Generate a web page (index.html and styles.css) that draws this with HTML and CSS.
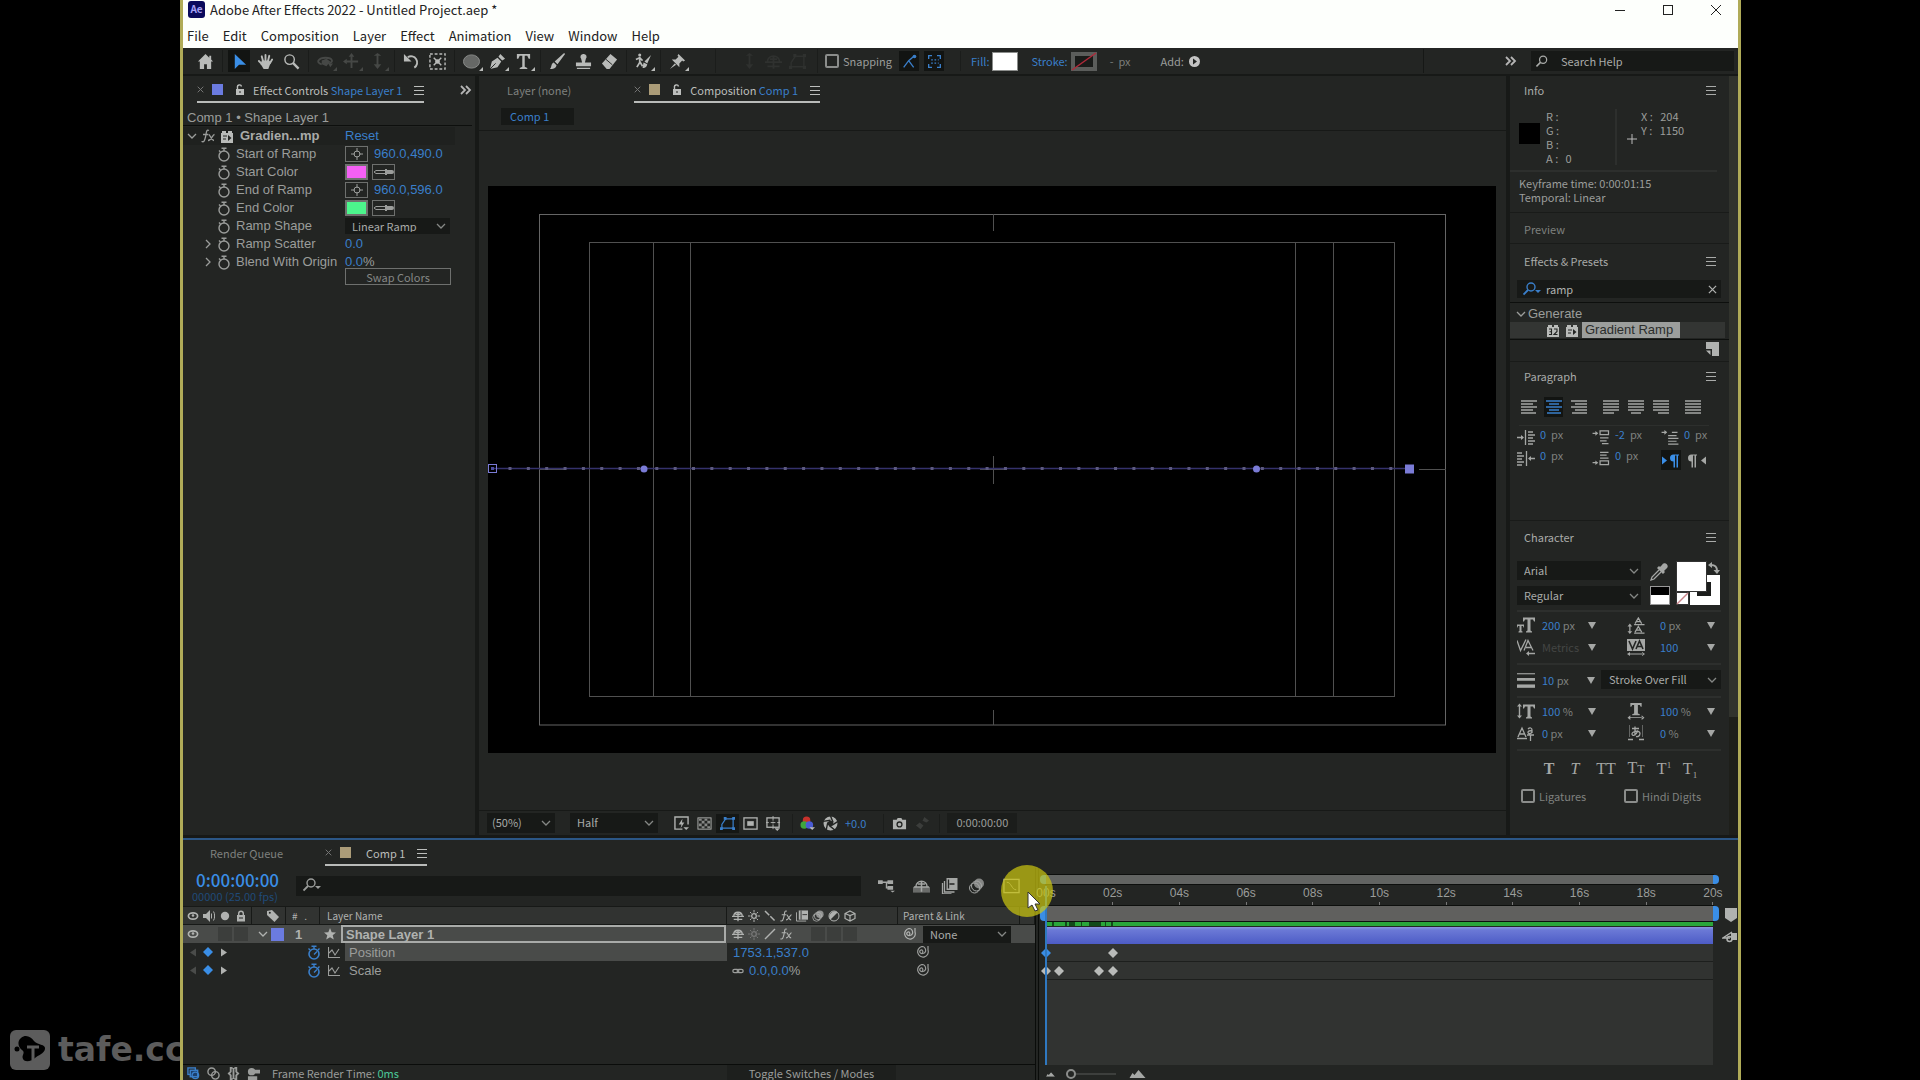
FILE: index.html
```html
<!DOCTYPE html>
<html lang="en">
<head>
    <meta charset="utf-8">
    <meta name="viewport" content="width=device-width, initial-scale=1">
    <title>Adobe After Effects 2022 - Untitled Project.aep *</title>
    <link rel="stylesheet" href="styles.css">
</head>
<body>
    <!-- icon sprite -->
    <svg class="sprite" aria-hidden="true">
        <symbol id="i-home" viewBox="0 0 18 18"><path fill="currentColor" d="M9 1 1 9h2v8h4.500v-5h3v5H15V9h2l-2-2V3h-2v2z"/></symbol>
        <symbol id="i-select" viewBox="0 0 18 18"><path fill="currentColor" d="M4 1v16l4.500-4.500H16z"/></symbol>
        <symbol id="i-hand" viewBox="0 0 18 18"><path fill="none" stroke="currentColor" stroke-width="2" stroke-linecap="round" d="M6.500 9 5 3.500M9 8V2M11.500 9 13 3M13.500 11 16 7M5.500 12 2 8.500"/><path fill="currentColor" d="M5 8h8l1.500 2-2.500 7H7l-3-5z"/></symbol>
        <symbol id="i-zoom" viewBox="0 0 18 18"><path fill="none" stroke="currentColor" stroke-width="1.500" d="M12 7A5 5 0 1 1 2 7a5 5 0 0 1 10 0z"/><path stroke="currentColor" stroke-width="2.500" d="m10.500 10.500 6 6"/></symbol>
        <symbol id="i-orbit" viewBox="0 0 18 18"><path fill="none" stroke="currentColor" stroke-width="2" d="M5 12c-7-2-3-7 4-7 8 0 9 5 3 6"/><path fill="currentColor" d="m5 8 5-2 4 3-4 5-5-2zM12 11h5l-3 4z"/></symbol>
        <symbol id="i-move" viewBox="0 0 18 18"><path stroke="currentColor" stroke-width="2" d="M9 2v14M2 9h14"/><path fill="currentColor" d="m9 0 3 4H6zM0 9l4-3v6z"/></symbol>
        <symbol id="i-dolly" viewBox="0 0 18 18"><path stroke="currentColor" stroke-width="2" d="M9 1v13"/><path fill="currentColor" d="m9 17-4-5h8zM5 3l4-3 4 3z"/></symbol>
        <symbol id="i-rotate" viewBox="0 0 18 18"><path fill="none" stroke="currentColor" stroke-width="2" d="M5 4.500A6.500 6.500 0 1 1 12 15.500"/><path fill="currentColor" d="M1 1v8h8z"/></symbol>
        <symbol id="i-anchor" viewBox="0 0 18 18"><rect x="1" y="1" width="16" height="16" fill="none" stroke="currentColor" stroke-width="1.500" stroke-dasharray="3 2"/><path stroke="currentColor" stroke-width="1.500" d="m5 5 8 8M13 5l-8 8"/><circle cx="9" cy="9" r="2.500" fill="currentColor"/></symbol>
        <symbol id="i-ellipse" viewBox="0 0 18 18"><ellipse cx="9" cy="9" rx="8.500" ry="7" fill="#666866" stroke="#8b8d8b"/></symbol>
        <symbol id="i-pen" viewBox="0 0 18 18"><path fill="currentColor" d="M1 17 3 9l6-4 4 4-4 6zM10 4l2-3 5 5-3 2z"/><path stroke="#232523" d="m1 17 6-6"/></symbol>
        <symbol id="i-type" viewBox="0 0 18 18"><path fill="currentColor" d="M2 1h14v5h-1.500L13 3h-2.700v11.500L13 16v1H5v-1l2.700-1.500V3H5L3.500 6H2z"/></symbol>
        <symbol id="i-brush" viewBox="0 0 18 18"><path fill="currentColor" d="M17 1 9 12l-3-3L16 0zM5 10l3 3c-1 4-4 4-7 4 2-2 1-6 4-7z"/></symbol>
        <symbol id="i-stamp" viewBox="0 0 18 18"><path fill="currentColor" d="M9 1a3 3 0 0 1 2.500 5L10.500 10H17v4H1v-4h6.500L6.500 6A3 3 0 0 1 9 1zM2 15.500h14V17H2z"/></symbol>
        <symbol id="i-eraser" viewBox="0 0 18 18"><path fill="currentColor" d="m1 11 9-10 7 6-8 10H6z"/><path stroke="#232523" d="m5 6.500 7 6"/></symbol>
        <symbol id="i-roto" viewBox="0 0 18 18"><path fill="none" stroke="currentColor" stroke-width="1.800" d="M5 4v6l-3 5M5 9l3 5M1 7l4-2 3 3"/><circle cx="5" cy="2" r="1.600" fill="currentColor"/><path fill="currentColor" d="m17 2-4 9-3-2zM9 10l4 2c-1 4-3 4-5 4z"/></symbol>
        <symbol id="i-pin" viewBox="0 0 18 18"><path fill="currentColor" d="m10 1 7 7-2 1-1-1-3 3v4l-8-8h4l3-3-1-1zM6 11l1.500 1.500L1 17z"/></symbol>
        <symbol id="i-snap1" viewBox="0 0 18 18"><path fill="none" stroke="currentColor" stroke-width="1.600" d="m2 16 6-8 7-6M8 8l6 8"/><circle cx="15" cy="3" r="2.200" fill="currentColor"/></symbol>
        <symbol id="i-snap2" viewBox="0 0 18 18"><path fill="none" stroke="currentColor" stroke-width="1.600" d="M2 6V2h4M12 2h4v4M16 12v4h-4M6 16H2v-4"/><path stroke="currentColor" stroke-width="1.600" stroke-dasharray="2 2" d="M5 7h9M5 11h9"/></symbol>
        <symbol id="i-more" viewBox="0 0 12 10"><path fill="none" stroke="currentColor" stroke-width="1.800" d="m1 1 4 4-4 4M6 1l4 4-4 4"/></symbol>
        <symbol id="i-menu" viewBox="0 0 10 10"><path stroke="currentColor" d="M0 1.500h10M0 5.500h10M0 9.500h10"/></symbol>
        <symbol id="i-close" viewBox="0 0 10 10"><path stroke="currentColor" stroke-width="1.400" d="m1 1 8 8M9 1 1 9"/></symbol>
        <symbol id="i-lock" viewBox="0 0 10 12"><path fill="none" stroke="currentColor" stroke-width="1.400" d="M2.500 6V3.500a2 2 0 0 1 4-1"/><rect x="1" y="5" width="8" height="6" fill="currentColor"/><path stroke="#232523" d="M5 7v2"/></symbol>
        <symbol id="i-locked" viewBox="0 0 10 12"><path fill="none" stroke="currentColor" stroke-width="1.400" d="M2.700 6V3.500a2.300 2.300 0 0 1 4.600 0V6"/><rect x="1" y="5" width="8" height="6.500" fill="currentColor"/><path stroke="#232523" d="M3 8h4"/></symbol>
        <symbol id="i-down" viewBox="0 0 10 6"><path fill="none" stroke="currentColor" stroke-width="1.300" d="m1 1 4 4 4-4"/></symbol>
        <symbol id="i-right" viewBox="0 0 6 10"><path fill="none" stroke="currentColor" stroke-width="1.300" d="m1 1 4 4-4 4"/></symbol>
        <symbol id="i-fx" viewBox="0 0 14 14"><path fill="none" stroke="currentColor" stroke-width="1.300" d="M8 1.500C5 0 5.500 4 4.500 8S3 13.500.500 12.500M2 5.500h5M7.500 5.500c2 0 2.500 6 5.500 6M13.500 5.500c-2 0-3 6-6.500 6"/></symbol>
        <symbol id="i-plug" viewBox="0 0 14 13"><path fill="currentColor" d="M1 3h1V1h4v2h2V1h4v2h1v10H1z"/><path fill="none" stroke="#232523" d="M3 6h4M3 9h3"/><path fill="#232523" d="m8 5 3.500 3L8 11z"/></symbol>
        <symbol id="i-plug32" viewBox="0 0 14 13"><path fill="currentColor" d="M1 3h1V1h4v2h2V1h4v2h1v10H1z"/><path fill="none" stroke="#232523" stroke-width="1.100" d="M3 5h2.500v5.500H3M3.500 7.700h2M8 5h3v2.500L8 10.500h3.500"/></symbol>
        <symbol id="i-watch" viewBox="0 0 14 15"><circle cx="7" cy="9" r="5" fill="none" stroke="currentColor" stroke-width="1.400"/><path fill="none" stroke="currentColor" stroke-width="1.400" d="M4.500 1.200h5M7 1v3M2 3.500l1.500 1.500"/></symbol>
        <symbol id="i-watchon" viewBox="0 0 14 15"><circle cx="7" cy="9" r="5" fill="none" stroke="currentColor" stroke-width="1.600"/><path fill="none" stroke="currentColor" stroke-width="1.400" d="M4.500 1.200h5M7 1v3M1.500 3.500 3 5M11 5l1.500-1.500M7 9.500l3-3"/></symbol>
        <symbol id="i-target" viewBox="0 0 12 12"><circle cx="6" cy="6" r="3" fill="none" stroke="currentColor"/><path stroke="currentColor" d="M6 0v4M6 8v4M0 6h4M8 6h4"/></symbol>
        <symbol id="i-dropper-h" viewBox="0 0 20 8"><path fill="none" stroke="currentColor" d="M12 2.500H2L0 4l2 1.500h10z"/><path fill="currentColor" d="M11 1h2v1h5a2 2 0 0 1 0 4h-5v1h-2z"/></symbol>
        <symbol id="i-search" viewBox="0 0 18 14"><circle cx="8" cy="5" r="4" fill="none" stroke="currentColor" stroke-width="1.400"/><path stroke="currentColor" stroke-width="1.800" d="M5 8 .500 12.500"/></symbol>
        <symbol id="i-searchmenu" viewBox="0 0 18 14"><circle cx="8" cy="5" r="4" fill="none" stroke="currentColor" stroke-width="1.400"/><path stroke="currentColor" stroke-width="1.800" d="M5 8 .500 12.500"/><path fill="currentColor" d="M12 8h6l-3 3z"/></symbol>
        <symbol id="i-preview" viewBox="0 0 16 16"><path fill="none" stroke="currentColor" stroke-width="1.500" d="M15 9V1H1v13h8"/><path fill="currentColor" d="M9 3 5 9h3l-1 4 4-6H8.500zM10 12h6l-3 3z"/></symbol>
        <symbol id="i-checker" viewBox="0 0 16 14"><rect x="1" y="1" width="14" height="12" fill="none" stroke="currentColor"/><path fill="currentColor" opacity=".7" d="M2 2h3v2H2zM8 2h3v2H8zM5 4h3v3H5zM11 4h3v3h-3zM2 7h3v3H2zM8 7h3v3H8zM5 10h3v2H5zM11 10h3v2h-3z"/></symbol>
        <symbol id="i-mask" viewBox="0 0 16 14"><path fill="none" stroke="currentColor" stroke-width="1.300" d="M2 12V8l4-6h8v10z"/><path fill="currentColor" d="M0 11h3v3H0zM13 11h3v3h-3zM13 0h3v3h-3zM4 0h3v3H4z"/></symbol>
        <symbol id="i-roi" viewBox="0 0 16 14"><rect x="1" y="1" width="14" height="12" fill="none" stroke="currentColor" stroke-width="1.400"/><path fill="currentColor" d="M4.500 4.500h7v5h-7z"/></symbol>
        <symbol id="i-grid" viewBox="0 0 16 16"><rect x="1" y="2" width="13" height="10" fill="none" stroke="currentColor" stroke-width="1.400"/><path stroke="currentColor" d="M7.500 0v5M7.500 6v2M7.500 9v5M0 7h3M5 7h5M12 7h3"/><path fill="currentColor" d="M9 13h6l-3 3z"/></symbol>
        <symbol id="i-rgb" viewBox="0 0 16 16"><circle cx="7" cy="4.500" r="4" fill="#c8322c"/><circle cx="4.500" cy="9.500" r="4" fill="#3fa63c"/><circle cx="10" cy="9.500" r="4" fill="#4a5bd4"/><path fill="#bbb" d="M10 12h6l-3 3z"/></symbol>
        <symbol id="i-shutter" viewBox="0 0 14 14"><circle cx="7" cy="7" r="4.500" fill="none" stroke="currentColor" stroke-width="4"/><path stroke="#232523" stroke-width="1.300" d="m7 0 2.500 6M14 5 8.500 8.500M11 13 6 9M3 13l1.500-7M0 5l7-1"/></symbol>
        <symbol id="i-camera" viewBox="0 0 16 14"><path fill="currentColor" d="M1 3h4l1-2h4l1 2h4v10H1z"/><circle cx="8" cy="8" r="2.600" fill="none" stroke="#232523" stroke-width="1.400"/></symbol>
        <symbol id="i-ghost" viewBox="0 0 16 14"><path fill="currentColor" d="m10 0 5 4-3 2-4-2zM1 9l4-3 4 3-3 4z"/></symbol>
        <symbol id="i-flow" viewBox="0 0 18 14"><path fill="none" stroke="currentColor" stroke-width="1.500" d="M1 3h8M9 3v6h5M9 3h2"/><path fill="currentColor" d="M0 1h5v4H0zM10 1h6v4h-6zM10 7h6v4h-6zM13 12h5l-2.500 2z"/></symbol>
        <symbol id="i-shy" viewBox="0 0 14 14"><path fill="none" stroke="currentColor" stroke-width="1.500" d="M2 7.500C2 1 12 1 12 7.500M0 7.500h14M7 3v10M2 11h10M4 5h6"/></symbol>
        <symbol id="i-shybig" viewBox="0 0 18 16"><path fill="currentColor" opacity=".55" d="M0 9h18v6H0z"/><path fill="none" stroke="currentColor" stroke-width="1.600" d="M3 9C3 1 15 1 15 9M1 9h16M9 3v11M5 6h8"/></symbol>
        <symbol id="i-blend" viewBox="0 0 16 16"><path fill="currentColor" d="M5 0h11v12H5z"/><path fill="none" stroke="currentColor" stroke-width="1.300" d="M3 3v11h10M1 5v11h9"/><path stroke="#232523" stroke-width="1.300" d="M8 6h5M7 1.500v9"/></symbol>
        <symbol id="i-blur" viewBox="0 0 16 16"><circle cx="6" cy="10" r="5" fill="none" stroke="currentColor"/><circle cx="8" cy="8" r="5" fill="none" stroke="currentColor"/><circle cx="10.500" cy="5.500" r="5" fill="currentColor" opacity=".75"/></symbol>
        <symbol id="i-graph" viewBox="0 0 18 16"><rect x="1" y="1" width="16" height="14" fill="none" stroke="currentColor" stroke-width="1.400"/><path fill="none" stroke="currentColor" d="M4 4c5 0 5 8 10 8"/></symbol>
        <symbol id="i-eye" viewBox="0 0 12 10"><ellipse cx="6" cy="5" rx="4.600" ry="3.200" fill="none" stroke="currentColor" stroke-width="1.700"/><circle cx="6" cy="4.500" r="1.300" fill="currentColor"/></symbol>
        <symbol id="i-sound" viewBox="0 0 12 12"><path fill="currentColor" d="M0 4h3l4-4v12L3 8H0z"/><path fill="none" stroke="currentColor" d="M8.500 3.500v5M10.500 1.500c1.500 2 1.500 7 0 9"/></symbol>
        <symbol id="i-dot" viewBox="0 0 10 10"><circle cx="5" cy="5" r="3.500" fill="currentColor"/></symbol>
        <symbol id="i-tag" viewBox="0 0 12 12"><path fill="currentColor" d="M0 1 5 0l7 7-4.500 5L0 5z"/><circle cx="2.800" cy="2.800" r="1" fill="#232523"/></symbol>
        <symbol id="i-sun" viewBox="0 0 12 12"><circle cx="6" cy="6" r="2.300" fill="none" stroke="currentColor" stroke-width="1.300"/><path stroke="currentColor" d="M6 0v2.500M6 9.500V12M0 6h2.500M9.500 6H12M2 2l1.500 1.500M8.500 8.500 10 10M10 2 8.500 3.500M2 10l1.500-1.500"/></symbol>
        <symbol id="i-slash" viewBox="0 0 12 12"><path stroke="currentColor" stroke-width="1.500" d="M1 11 11 1"/></symbol>
        <symbol id="i-backslash" viewBox="0 0 12 12"><path stroke="currentColor" stroke-width="1.500" stroke-dasharray="6 1.500" d="m1 1 10 10"/></symbol>
        <symbol id="i-film" viewBox="0 0 13 12"><path fill="currentColor" d="M3 0h10v10H3z"/><path fill="none" stroke="currentColor" d="M.500 2v9.500H11"/><path stroke="#333" d="M5.500 0v10M7 4.500h5"/></symbol>
        <symbol id="i-half" viewBox="0 0 12 12"><circle cx="6" cy="6" r="5" fill="none" stroke="currentColor"/><path fill="currentColor" d="M2.500 9.500a5 5 0 0 1 7-7z"/></symbol>
        <symbol id="i-cube" viewBox="0 0 12 12"><path fill="none" stroke="currentColor" stroke-width="1.200" d="m6 1 5 2.500v5L6 11 1 8.500v-5zM1 3.500l5 2 5-2M6 5.500V11"/></symbol>
        <symbol id="i-star" viewBox="0 0 12 12"><path fill="currentColor" d="m6 0 1.700 4.200 4.300.300-3.300 2.800 1.100 4.200L6 9.200l-3.800 2.300 1.100-4.200L0 4.500l4.300-.300z"/></symbol>
        <symbol id="i-whorl" viewBox="0 0 13 12"><path fill="none" stroke="currentColor" stroke-width="1.200" d="M12 0v4a5.300 5.300 0 1 1-6-3.500c3 0 4 3 3.500 5S5 8.500 4 6.500 5.500 3 6.500 4.500 6 6.500 6 6.500"/></symbol>
        <symbol id="i-link" viewBox="0 0 14 8"><rect x="1" y="2" width="7" height="4" rx="2" fill="none" stroke="currentColor" stroke-width="1.500"/><rect x="6" y="2" width="7" height="4" rx="2" fill="none" stroke="currentColor" stroke-width="1.500"/></symbol>
        <symbol id="i-curve" viewBox="0 0 12 11"><path fill="none" stroke="currentColor" stroke-width="1.100" d="M.500 0v10.500H12M1 6l3-3 3 5 4-6"/></symbol>
        <symbol id="i-prev" viewBox="0 0 6 8"><path fill="currentColor" d="M6 0v8L0 4z"/></symbol>
        <symbol id="i-next" viewBox="0 0 6 8"><path fill="currentColor" d="M0 0v8l6-4z"/></symbol>
        <symbol id="i-key" viewBox="0 0 10 10"><path fill="currentColor" d="m5 0 5 5-5 5-5-5z"/></symbol>
        <symbol id="i-new" viewBox="0 0 14 14"><path fill="currentColor" d="M1 0h13v14H7V7H1z"/><path fill="currentColor" d="M1 8.500h4.500V13z"/></symbol>
        <symbol id="i-al" viewBox="0 0 16 14"><path stroke="currentColor" stroke-width="1.400" d="M0 1h16M0 4h12M0 7h16M0 10h12M0 13h15"/></symbol>
        <symbol id="i-ac" viewBox="0 0 16 14"><path stroke="currentColor" stroke-width="1.400" d="M0 1h16M3 4h10M0 7h16M3 10h10M1 13h14"/></symbol>
        <symbol id="i-ar" viewBox="0 0 16 14"><path stroke="currentColor" stroke-width="1.400" d="M0 1h16M4 4h12M0 7h16M4 10h12M1 13h15"/></symbol>
        <symbol id="i-jl" viewBox="0 0 16 14"><path stroke="currentColor" stroke-width="1.400" d="M0 1h16M0 4h16M0 7h16M0 10h16M0 13h11"/></symbol>
        <symbol id="i-jc" viewBox="0 0 16 14"><path stroke="currentColor" stroke-width="1.400" d="M0 1h16M0 4h16M0 7h16M0 10h16M3 13h10"/></symbol>
        <symbol id="i-jr" viewBox="0 0 16 14"><path stroke="currentColor" stroke-width="1.400" d="M0 1h16M0 4h16M0 7h16M0 10h16M5 13h11"/></symbol>
        <symbol id="i-jf" viewBox="0 0 16 14"><path stroke="currentColor" stroke-width="1.400" d="M0 1h16M0 4h16M0 7h16M0 10h16M0 13h16"/></symbol>
        <symbol id="i-indl" viewBox="0 0 18 15"><path fill="none" stroke="currentColor" stroke-width="1.300" d="M0 7.500h6M8.500 0v15M11 2h5M11 5h7M11 8h5M11 11h7M11 14h5"/><path fill="currentColor" d="m4 5 3 2.500L4 10z"/></symbol>
        <symbol id="i-indr" viewBox="0 0 18 15"><path fill="none" stroke="currentColor" stroke-width="1.300" d="M18 7.500h-6M9.500 0v15M0 2h5M0 5h7M0 8h5M0 11h7M0 14h5"/><path fill="currentColor" d="m14 5-3 2.500 3 2.500z"/></symbol>
        <symbol id="i-spb" viewBox="0 0 18 16"><path fill="none" stroke="currentColor" stroke-width="1.300" d="M0 3.500h5M8 1h9v4H8zM8 8.500h9M8 11.500h7M10 14.500h7"/><path fill="currentColor" d="m3 1 3 2.500L3 6z"/></symbol>
        <symbol id="i-spa" viewBox="0 0 18 16"><path fill="none" stroke="currentColor" stroke-width="1.300" d="M0 12.500h5M8 10.500h9v4H8zM8 1.500h9M8 4.500h7M8 7.500h9"/><path fill="currentColor" d="m3 10 3 2.500L3 15z"/></symbol>
        <symbol id="i-first" viewBox="0 0 18 16"><path fill="none" stroke="currentColor" stroke-width="1.300" d="M0 2.500h5M11 2.500h6M7 6h9M7 9h11M7 12h9M7 15h11"/><path fill="currentColor" d="m3 0 3 2.500L3 5z"/></symbol>
        <symbol id="i-ltr" viewBox="0 0 18 14"><path fill="currentColor" d="m0 3 5 4-5 4zM17 1v1h-1v12h-1.500V2H13v12h-1.500V8a3.500 3.500 0 0 1 0-7z"/></symbol>
        <symbol id="i-rtl" viewBox="0 0 18 14"><path fill="currentColor" d="m18 3-5 4 5 4zM9 1v1H8v12H6.500V2H5v12H3.500V8a3.500 3.500 0 0 1 0-7z"/></symbol>
        <symbol id="i-dropper" viewBox="0 0 18 18"><path fill="currentColor" d="M12 2a3 3 0 1 1 4 4l-2 2 1 1-2 2-6-6 2-2 1 1z"/><path fill="none" stroke="currentColor" stroke-width="1.300" d="m9 7-7 7-1 3 3-1 7-7"/></symbol>
        <symbol id="i-swap" viewBox="0 0 12 12"><path fill="none" stroke="currentColor" stroke-width="2" d="M3 3c4 0 6 1 6 6"/><path fill="currentColor" d="M0 3 4 0v6zM5.500 8H12l-3 4z"/></symbol>
        <symbol id="i-size" viewBox="0 0 18 16"><path fill="currentColor" d="M6 0h12v4h-1l-1-2h-2.500v11l1.500 1v1H9v-1l1.500-1V2H8L7 4H6zM0 7h7v3H6.500L6 8.500H4.500v5l1 .500v1h-4v-1l1-.500v-5H1L.500 10H0z"/></symbol>
        <symbol id="i-lead" viewBox="0 0 18 18"><path fill="none" stroke="currentColor" stroke-width="1.300" d="M7 8h11M7 17h11M8 7l3.500-6L15 7M9 5h5M8 16l3.500-6 3.500 6M9 14h5M2.500 9v8"/><path fill="currentColor" d="m2.500 7 2.500 3H0zM0 15h5l-2.500 3z"/></symbol>
        <symbol id="i-kern" viewBox="0 0 18 16"><path fill="none" stroke="currentColor" stroke-width="1.300" d="m0 1 3.500 10L9 0M7 11l4-10 5 10M9 8h5M11 14h7"/><path fill="currentColor" d="m9 14 3-2.500v5z"/></symbol>
        <symbol id="i-track" viewBox="0 0 18 17"><path fill="currentColor" d="M0 0h18v12H0zM0 15l3-2v4zM18 15l-3-2v4zM2 14.500h14v1H2z"/><path fill="none" stroke="#232523" stroke-width="1.600" d="m2 2 3.500 8L9 2M9 10l3.500-8L16 10M10 7.500h5"/></symbol>
        <symbol id="i-stroke" viewBox="0 0 16 14"><path stroke="currentColor" d="M0 1h16"/><path stroke="currentColor" stroke-width="2.500" d="M0 6h16"/><path stroke="currentColor" stroke-width="3" d="M0 12h16"/></symbol>
        <symbol id="i-vscale" viewBox="0 0 18 16"><path fill="currentColor" d="M6 1h12v4h-1l-1-2h-2.500v10l1.500 1v1H9v-1l1.500-1V3H8L7 5H6zM2.500 0 5 3H3.200v9H5l-2.500 3L0 12h1.800V3H0z"/></symbol>
        <symbol id="i-hscale" viewBox="0 0 18 18"><path fill="currentColor" d="M3 0h12v4h-1l-1-2h-2v9l2 1v1H5v-1l2-1V2H5L4 4H3zM0 15.500 3 13v5zM18 15.500 15 13v5zM2 15h14v1H2z"/></symbol>
        <symbol id="i-base" viewBox="0 0 18 15"><path fill="none" stroke="currentColor" stroke-width="1.300" d="m1 11 4-9 4 9M2.500 8h5M0 12.500h10M11 3c2-2 4-1 4 1v3M15 5c-4-1-5 2-3 2.500s3-1 3-2M10 9h7M13.500 9v6"/></symbol>
        <symbol id="i-tsume" viewBox="0 0 18 16"><path fill="none" stroke="currentColor" stroke-dasharray="1 1" d="M2.500 0v11M15.500 0v11"/><path fill="none" stroke="currentColor" stroke-width="1.300" d="M5 3h7M8 1v9M11 5c-2 5-6 6-6 3.500S13 4 13 8s-4 3-4 3M1 14h5M12 14h5"/></symbol>
        <symbol id="i-marker" viewBox="0 0 12 14"><path fill="currentColor" d="M0 0h12v10l-6 4-6-4z"/></symbol>
        <symbol id="i-compbtn" viewBox="0 0 15 12"><path fill="none" stroke="currentColor" stroke-width="1.500" d="M10 1 1 7h7"/><circle cx="7.500" cy="8" r="2.500" fill="none" stroke="currentColor" stroke-width="1.500"/><path fill="currentColor" d="M9 2h6v7H9z"/></symbol>
        <symbol id="i-mtn" viewBox="0 0 16 8"><path fill="currentColor" d="m0 8 3-5 2 2 4-5 7 8z"/></symbol>
        <symbol id="i-layers" viewBox="0 0 14 14"><rect x="1" y="1" width="8" height="7" fill="none" stroke="currentColor" stroke-width="1.500"/><rect x="3.500" y="3.500" width="8" height="7" fill="#1c3f6c" stroke="currentColor" stroke-width="1.500"/><circle cx="9" cy="9" r="3.500" fill="none" stroke="currentColor" stroke-width="1.500"/></symbol>
        <symbol id="i-modes" viewBox="0 0 14 14"><circle cx="5" cy="5" r="4" fill="none" stroke="currentColor" stroke-width="1.500"/><circle cx="9" cy="9" r="4" fill="none" stroke="currentColor" stroke-width="1.500"/></symbol>
        <symbol id="i-braces" viewBox="0 0 14 14"><path fill="none" stroke="currentColor" stroke-width="2" d="M6 1H4v4L2 7l2 2v4h2M8 1h2v4l2 2-2 2v4H8M7 1v12"/></symbol>
        <symbol id="i-render" viewBox="0 0 14 14"><circle cx="5" cy="5" r="4" fill="currentColor"/><path fill="currentColor" d="M1 10h10v4H1zM8 3h6v4H8z"/></symbol>
    </svg>

    <div class="watermark">
        <svg width="40" height="40" viewBox="0 0 40 40"><rect width="40" height="40" rx="6" fill="#5c5c5c"/><path d="M11 8c5-4 10-1 13 3s12 3 11 8-7 6-10 9-10 5-12 1 3-6-1-9-5-9-1-12z"/><circle cx="7" cy="19" r="2.500"/><path stroke="#5c5c5c" stroke-width="3" d="M17 17h12M23 17v13"/></svg>
        <span>tafe.cc</span>
    </div>

    <div class="app">
        <header class="titlebar">
            <span class="logo">Ae</span>
            <h1>Adobe After Effects 2022 - Untitled Project.aep *</h1>
            <div class="window-buttons">
                <button aria-label="Minimize"><svg width="12" height="12"><path stroke="#222" d="M1 6.500h10"/></svg></button>
                <button aria-label="Maximize"><svg width="12" height="12"><rect x="1.500" y="1.500" width="9" height="9" fill="none" stroke="#222"/></svg></button>
                <button aria-label="Close"><svg width="12" height="12"><path stroke="#222" d="m1 1 10 10M11 1 1 11"/></svg></button>
            </div>
        </header>

        <nav class="menubar">
            <button>File</button><button>Edit</button><button>Composition</button><button>Layer</button><button>Effect</button><button>Animation</button><button>View</button><button>Window</button><button>Help</button>
        </nav>

        <div class="toolbar">
            <button class="tool"><svg><use href="#i-home"/></svg></button>
            <i class="sep"></i>
            <button class="tool active"><svg><use href="#i-select"/></svg></button>
            <button class="tool"><svg><use href="#i-hand"/></svg></button>
            <button class="tool"><svg><use href="#i-zoom"/></svg></button>
            <i class="sep"></i>
            <button class="tool off more"><svg><use href="#i-orbit"/></svg></button>
            <button class="tool off more"><svg><use href="#i-move"/></svg></button>
            <button class="tool off more"><svg><use href="#i-dolly"/></svg></button>
            <i class="sep"></i>
            <button class="tool"><svg><use href="#i-rotate"/></svg></button>
            <button class="tool"><svg><use href="#i-anchor"/></svg></button>
            <i class="sep"></i>
            <button class="tool more"><svg><use href="#i-ellipse"/></svg></button>
            <button class="tool more"><svg><use href="#i-pen"/></svg></button>
            <button class="tool more"><svg><use href="#i-type"/></svg></button>
            <i class="sep"></i>
            <button class="tool"><svg><use href="#i-brush"/></svg></button>
            <button class="tool"><svg><use href="#i-stamp"/></svg></button>
            <button class="tool"><svg><use href="#i-eraser"/></svg></button>
            <i class="sep"></i>
            <button class="tool more"><svg><use href="#i-roto"/></svg></button>
            <i class="sep"></i>
            <button class="tool more"><svg><use href="#i-pin"/></svg></button>
            <div class="axis">
                <button class="tool faint"><svg><use href="#i-dolly"/></svg></button>
                <button class="tool faint"><svg><use href="#i-shy"/></svg></button>
                <button class="tool faint"><svg><use href="#i-mask"/></svg></button>
            </div>
            <label class="check"><input type="checkbox">Snapping</label>
            <div class="snap">
                <button><svg><use href="#i-snap1"/></svg></button>
                <button><svg><use href="#i-snap2"/></svg></button>
            </div>
            <div class="paint">
                <span class="blue">Fill:</span><button class="swatch fill" aria-label="Fill"></button>
                <span class="blue stroke-label">Stroke:</span><button class="swatch nostroke" aria-label="Stroke"><svg viewBox="0 0 26 19"><path stroke="#b02a3a" stroke-width="1.500" d="M1 18 25 1"/></svg></button>
                <span class="stroke-px">-&nbsp; px</span>
                <span>Add:</span>
                <button class="add" aria-label="Add"><svg width="11" height="11" viewBox="0 0 11 11"><circle cx="5.500" cy="5.500" r="5.500" fill="#c4c4c4"/><path fill="#232523" d="m4 2.500 4 3-4 3z"/></svg></button>
            </div>
            <div class="toolbar-end">
                <button aria-label="More"><svg class="i-more"><use href="#i-more"/></svg></button>
                <label class="help"><svg><use href="#i-search"/></svg><input type="text" value="Search Help" aria-label="Search Help"></label>
            </div>
        </div>

        <main class="workspace">
            <section class="panel effect-controls">
                <div class="tabs">
                    <button class="tab active">
                        <svg class="x"><use href="#i-close"/></svg><i class="chip blue-chip"></i><svg class="lock"><use href="#i-lock"/></svg>
                        <span>Effect Controls <b>Shape Layer 1</b></span><svg class="menu"><use href="#i-menu"/></svg>
                    </button>
                    <button class="tabs-more"><svg class="i-more"><use href="#i-more"/></svg></button>
                </div>
                <p class="path">Comp 1 • Shape Layer 1</p>
                <div class="fx-head">
                    <svg class="down"><use href="#i-down"/></svg><svg class="fx"><use href="#i-fx"/></svg><svg class="plug"><use href="#i-plug"/></svg>
                    <strong>Gradien...mp</strong><button class="blue">Reset</button>
                </div>
                <div class="prop"><i></i><svg class="watch"><use href="#i-watch"/></svg><span>Start of Ramp</span><div><button class="box"><svg width="12" height="12"><use href="#i-target"/></svg></button><span class="blue">960.0,490.0</span></div></div>
                <div class="prop"><i></i><svg class="watch"><use href="#i-watch"/></svg><span>Start Color</span><div><button class="box pink" aria-label="Start Color"></button><button class="box"><svg width="20" height="8"><use href="#i-dropper-h"/></svg></button></div></div>
                <div class="prop"><i></i><svg class="watch"><use href="#i-watch"/></svg><span>End of Ramp</span><div><button class="box"><svg width="12" height="12"><use href="#i-target"/></svg></button><span class="blue">960.0,596.0</span></div></div>
                <div class="prop"><i></i><svg class="watch"><use href="#i-watch"/></svg><span>End Color</span><div><button class="box green" aria-label="End Color"></button><button class="box"><svg width="20" height="8"><use href="#i-dropper-h"/></svg></button></div></div>
                <div class="prop"><i></i><svg class="watch"><use href="#i-watch"/></svg><label for="rampShape">Ramp Shape</label><div><span class="drop ramp"><select id="rampShape"><option>Linear Ramp</option></select><svg><use href="#i-down"/></svg></span></div></div>
                <div class="prop"><svg class="right"><use href="#i-right"/></svg><svg class="watch"><use href="#i-watch"/></svg><span>Ramp Scatter</span><div><span class="blue">0.0</span></div></div>
                <div class="prop"><svg class="right"><use href="#i-right"/></svg><svg class="watch"><use href="#i-watch"/></svg><span>Blend With Origin</span><div><span class="blue">0.0</span>%</div></div>
                <button class="swap-colors">Swap Colors</button>
            </section>

            <section class="panel viewer">
                <div class="tabs">
                    <button class="tab layer-tab">Layer (none)</button>
                    <button class="tab active">
                        <svg class="x"><use href="#i-close"/></svg><i class="chip tan-chip"></i><svg class="lock"><use href="#i-lock"/></svg>
                        <span>Composition <b>Comp 1</b></span><svg class="menu"><use href="#i-menu"/></svg>
                    </button>
                </div>
                <div class="crumbs"><button>Comp 1</button></div>
                <div class="stage">
                    <svg class="comp" viewBox="0 0 1008 567">
                        <rect width="1008" height="567"/>
                        <g fill="none" stroke="#656565">
                            <rect x="51.500" y="28.500" width="906" height="510.500"/>
                            <g stroke="#505050">
                                <rect x="101.500" y="56.500" width="805" height="454"/>
                                <path d="M165.500 56v454M202.500 56v454M807.500 56v454M845.500 56v454"/>
                                <path d="M505.500 28v17M505.500 270v28M505.500 524v15M51 283.500h26M492 283.500h27M931 283.500h27"/>
                            </g>
                        </g>
                        <path stroke="#34316b" stroke-width="1.500" d="M4 282.500h918"/>
                        <path stroke="#5d5a80" stroke-width="3" stroke-dasharray="3 15.350" d="M20.500 282.500h884"/>
                        <g fill="#7a7bd6">
                            <circle cx="156" cy="283" r="3.500"/><circle cx="768.500" cy="283" r="3.500"/>
                            <rect x="917" y="278.500" width="9" height="9"/>
                            <rect x=".5" y="278.500" width="8" height="8" fill="none" stroke="#7a7bd6"/><rect x="3" y="281" width="3" height="3" fill="#4d4da0"/>
                        </g>
                    </svg>
                </div>
                <div class="viewer-bar">
                    <span class="drop zoom"><select aria-label="Magnification"><option>(50%)</option></select><svg><use href="#i-down"/></svg></span>
                    <span class="drop res"><select aria-label="Resolution"><option>Half</option></select><svg><use href="#i-down"/></svg></span>
                    <div class="view-icons">
                        <button><svg><use href="#i-preview"/></svg></button>
                        <button><svg><use href="#i-checker"/></svg></button>
                        <button class="on"><svg><use href="#i-mask"/></svg></button>
                        <button><svg><use href="#i-roi"/></svg></button>
                        <button><svg><use href="#i-grid"/></svg></button>
                    </div>
                    <div class="view-icons bar">
                        <button><svg><use href="#i-rgb"/></svg></button>
                        <button><svg><use href="#i-shutter"/></svg></button>
                    </div>
                    <span class="blue exposure">+0.0</span>
                    <div class="view-icons bar shots">
                        <button><svg><use href="#i-camera"/></svg></button>
                        <button class="dim"><svg><use href="#i-ghost"/></svg></button>
                    </div>
                    <button class="view-time">0:00:00:00</button>
                </div>
            </section>

            <aside class="panel side">
                <section class="info">
                    <h2>Info<svg class="menu"><use href="#i-menu"/></svg></h2>
                    <div class="info-grid">
                        <i class="black"></i>
                        <ul><li>R :</li><li>G :</li><li>B :</li><li>A :&nbsp; &nbsp;0</li></ul>
                        <svg class="plus" width="10" height="10"><path stroke="#bbb" d="M5 0v10M0 5h10"/></svg>
                        <ul><li>X :&nbsp; &nbsp;204</li><li>Y :&nbsp; &nbsp;1150</li></ul>
                    </div>
                    <p>Keyframe time: 0:00:01:15<br>Temporal: Linear</p>
                </section>
                <section class="preview"><h2>Preview</h2></section>
                <section class="presets">
                    <h2>Effects &amp; Presets<svg class="menu"><use href="#i-menu"/></svg></h2>
                    <div class="preset-search"><svg class="mag"><use href="#i-searchmenu"/></svg><input type="text" value="ramp" aria-label="Search effects"><button aria-label="Clear"><svg class="x"><use href="#i-close"/></svg></button></div>
                    <div class="group"><svg class="down"><use href="#i-down"/></svg>Generate</div>
                    <div class="preset"><svg class="plug"><use href="#i-plug32"/></svg><svg class="plug"><use href="#i-plug"/></svg><span>Gradient Ramp</span></div>
                    <div class="preset-foot"><button><svg width="14" height="14"><use href="#i-new"/></svg></button></div>
                </section>
                <section class="paragraph">
                    <h2>Paragraph<svg class="menu"><use href="#i-menu"/></svg></h2>
                    <div class="align">
                        <button><svg><use href="#i-al"/></svg></button><button class="on"><svg><use href="#i-ac"/></svg></button><button><svg><use href="#i-ar"/></svg></button>
                        <button class="gap"><svg><use href="#i-jl"/></svg></button><button><svg><use href="#i-jc"/></svg></button><button><svg><use href="#i-jr"/></svg></button>
                        <button class="gap"><svg><use href="#i-jf"/></svg></button>
                    </div>
                    <div class="indents">
                        <div><svg><use href="#i-indl"/></svg><b>0</b> px</div>
                        <div><svg><use href="#i-spb"/></svg><b>-2</b> px</div>
                        <div><svg><use href="#i-first"/></svg><b>0</b> px</div>
                        <div><svg><use href="#i-indr"/></svg><b>0</b> px</div>
                        <div><svg><use href="#i-spa"/></svg><b>0</b> px</div>
                        <div class="dir"><button class="on"><svg><use href="#i-ltr"/></svg></button><button><svg><use href="#i-rtl"/></svg></button></div>
                    </div>
                </section>
                <section class="character">
                    <h2>Character<svg class="menu"><use href="#i-menu"/></svg></h2>
                    <div class="font-row">
                        <div class="fonts">
                            <span class="drop"><select aria-label="Font family"><option>Arial</option></select><svg><use href="#i-down"/></svg></span>
                            <span class="drop"><select aria-label="Font style"><option>Regular</option></select><svg><use href="#i-down"/></svg></span>
                        </div>
                        <div class="pick">
                            <svg width="18" height="18"><use href="#i-dropper"/></svg>
                            <i class="bw"></i>
                        </div>
                        <svg class="colors" width="44" height="44" viewBox="0 0 44 44">
                            <path fill="#fff" d="M14 14h30v30H14z"/><path fill="#1c1d1c" d="M21 21h14v14H21z"/>
                            <path fill="#fff" stroke="#333" d="M.500.500h30v30H.500z"/>
                            <path fill="#fff" stroke="#333" d="M.500 31.500h12v12H.500z"/><path stroke="#c9848a" stroke-width="1.500" d="m1 43 11-11"/>
                            <use href="#i-swap" x="32" y="1" width="12" height="12"/>
                        </svg>
                    </div>
                    <div class="pair">
                        <div><svg><use href="#i-size"/></svg><span><b>200</b> px</span><i></i></div>
                        <div><svg><use href="#i-lead"/></svg><span><b>0</b> px</span><i></i></div>
                        <div><svg><use href="#i-kern"/></svg><span class="metrics">Metrics</span><i></i></div>
                        <div><svg><use href="#i-track"/></svg><span><b>100</b></span><i></i></div>
                    </div>
                    <div class="pair stroke-row">
                        <div><svg><use href="#i-stroke"/></svg><span><b>10</b> px</span><i></i></div>
                        <span class="drop"><select aria-label="Stroke order"><option>Stroke Over Fill</option></select><svg><use href="#i-down"/></svg></span>
                    </div>
                    <div class="pair">
                        <div><svg><use href="#i-vscale"/></svg><span><b>100</b> %</span><i></i></div>
                        <div><svg><use href="#i-hscale"/></svg><span><b>100</b> %</span><i></i></div>
                        <div><svg><use href="#i-base"/></svg><span><b>0</b> px</span><i></i></div>
                        <div><svg><use href="#i-tsume"/></svg><span><b>0</b> %</span><i></i></div>
                    </div>
                    <div class="styles">
                        <button class="heavy">T</button><button class="ital">T</button><button>TT</button><button>T<small>T</small></button><button>T<sup>1</sup></button><button>T<sub>1</sub></button>
                    </div>
                    <div class="checks">
                        <label class="check"><input type="checkbox">Ligatures</label>
                        <label class="check"><input type="checkbox">Hindi Digits</label>
                    </div>
                </section>
            </aside>
        </main>

        <section class="timeline">
            <div class="tabs">
                <button class="tab queue-tab">Render Queue</button>
                <button class="tab active"><svg class="x"><use href="#i-close"/></svg><i class="chip tan-chip"></i><span class="comp-name">Comp 1</span><svg class="menu"><use href="#i-menu"/></svg></button>
            </div>
            <div class="time-body">
                <div class="layers">
                    <div class="time-head">
                        <div class="timecode"><strong>0:00:00:00</strong><small>00000 (25.00 fps)</small></div>
                        <label class="layer-search"><svg class="mag"><use href="#i-searchmenu"/></svg><input type="text" aria-label="Search layers"></label>
                        <div class="time-tools">
                            <button><svg><use href="#i-flow"/></svg></button>
                            <button><svg><use href="#i-shybig"/></svg></button>
                            <button><svg><use href="#i-blend"/></svg></button>
                            <button><svg><use href="#i-blur"/></svg></button>
                            <button><svg><use href="#i-graph"/></svg></button>
                        </div>
                    </div>
                    <div class="lrow lhead">
                        <div class="cells"><svg><use href="#i-eye"/></svg><svg><use href="#i-sound"/></svg><svg><use href="#i-dot"/></svg><svg><use href="#i-locked"/></svg></div>
                        <div class="center"><svg><use href="#i-tag"/></svg></div>
                        <div class="num">#&nbsp; &nbsp;.</div>
                        <div class="lname">Layer Name</div>
                        <div class="cells sw"><svg><use href="#i-shy"/></svg><svg><use href="#i-sun"/></svg><svg><use href="#i-backslash"/></svg><svg><use href="#i-fx"/></svg><svg><use href="#i-film"/></svg><svg><use href="#i-blur"/></svg><svg><use href="#i-half"/></svg><svg><use href="#i-cube"/></svg></div>
                        <div class="parent">Parent &amp; Link</div>
                        <div></div>
                    </div>
                    <div class="lrow layer">
                        <div class="cells"><svg><use href="#i-eye"/></svg><i class="none"></i><i></i><i></i></div>
                        <div class="label"><svg class="down"><use href="#i-down"/></svg><i class="chip blue-chip"></i></div>
                        <div class="index">1</div>
                        <div class="lname"><svg class="star"><use href="#i-star"/></svg><span class="name-box">Shape Layer 1</span></div>
                        <div class="cells sw"><svg><use href="#i-shy"/></svg><svg class="dimmed"><use href="#i-sun"/></svg><svg><use href="#i-slash"/></svg><svg><use href="#i-fx"/></svg><i class="none"></i><i></i><i></i><i></i></div>
                        <div class="parent"><svg class="whorl"><use href="#i-whorl"/></svg><span class="drop"><select aria-label="Parent"><option>None</option></select><svg><use href="#i-down"/></svg></span></div>
                        <div></div>
                    </div>
                    <div class="lrow lprop">
                        <div class="cells keys"><svg class="ghost"><use href="#i-prev"/></svg><svg class="key"><use href="#i-key"/></svg><svg><use href="#i-next"/></svg></div>
                        <div></div><div class="stop"><svg class="watch"><use href="#i-watchon"/></svg></div>
                        <div class="lname"><svg class="curve"><use href="#i-curve"/></svg><span class="prop-name picked">Position</span></div>
                        <div class="value"><span class="blue">1753.1,537.0</span></div>
                        <div class="parent"><svg class="whorl"><use href="#i-whorl"/></svg></div>
                        <div></div>
                    </div>
                    <div class="lrow lprop">
                        <div class="cells keys"><svg class="ghost"><use href="#i-prev"/></svg><svg class="key"><use href="#i-key"/></svg><svg><use href="#i-next"/></svg></div>
                        <div></div><div class="stop"><svg class="watch"><use href="#i-watchon"/></svg></div>
                        <div class="lname"><svg class="curve"><use href="#i-curve"/></svg><span class="prop-name">Scale</span></div>
                        <div class="value"><svg class="chain"><use href="#i-link"/></svg><span class="blue">0.0,0.0</span>%</div>
                        <div class="parent"><svg class="whorl"><use href="#i-whorl"/></svg></div>
                        <div></div>
                    </div>
                    <footer class="layers-foot">
                        <svg class="lit"><use href="#i-layers"/></svg><svg><use href="#i-modes"/></svg><svg><use href="#i-braces"/></svg><svg><use href="#i-render"/></svg>
                        <span>Frame Render Time: <b>0ms</b></span>
                        <button>Toggle Switches / Modes</button>
                    </footer>
                </div>

                <div class="tracks">
                    <div class="navigator"></div>
                    <ol class="ruler"><li>00s</li><li>02s</li><li>04s</li><li>06s</li><li>08s</li><li>10s</li><li>12s</li><li>14s</li><li>16s</li><li>18s</li><li>20s</li></ol>
                    <div class="work-area"></div>
                    <div class="cache"><i style="left:0.9%;width:0.3%"></i><i style="left:2.8%;width:0.3%"></i><i style="left:3.5%;width:0.9%"></i><i style="left:5.2%;width:0.2%"></i><i style="left:6.4%;width:1.8%"></i><i style="left:8.8%;width:0.2%"></i><i style="left:9.8%;width:0.3%"></i></div>
                    <div class="clip"></div>
                    <div class="track">
                        <svg class="kf sel" style="left:0%"><use href="#i-key"/></svg><svg class="kf" style="left:10%"><use href="#i-key"/></svg>
                    </div>
                    <div class="track">
                        <svg class="kf" style="left:0%"><use href="#i-key"/></svg><svg class="kf" style="left:2%"><use href="#i-key"/></svg><svg class="kf" style="left:8%"><use href="#i-key"/></svg><svg class="kf" style="left:10%"><use href="#i-key"/></svg>
                    </div>
                    <div class="track rest"></div>
                    <div class="playhead"></div>
                    <div class="side-marks"><svg width="12" height="14"><use href="#i-marker"/></svg><svg width="15" height="12"><use href="#i-compbtn"/></svg></div>
                    <footer class="tracks-foot">
                        <svg width="9" height="5" viewBox="0 0 16 8"><use href="#i-mtn"/></svg>
                        <input type="range" min="0" max="100" value="0" aria-label="Timeline zoom">
                        <svg width="17" height="8"><use href="#i-mtn"/></svg>
                    </footer>
                </div>
            </div>
            <div class="pointer">
                <svg width="14" height="22" viewBox="0 0 14 22"><path fill="#fff" stroke="#333" d="M1 1v16l4-3 3 6 3-1-3-6h5z"/></svg>
            </div>
        </section>
    </div>
</body>
</html>
```
FILE: styles.css
```css
* {
    box-sizing: border-box;
}

body {
    margin: 0;
    background: #000;
    color: #9b9d9b;
    font-family: "Noto Sans CJK SC", sans-serif;
    font-size: 11px;
    line-height: 16px;
    overflow: hidden;
}

h1, h2, p, ul, ol {
    margin: 0;
    padding: 0;
    font-weight: normal;
    list-style: none;
}

button, input, select {
    font: inherit;
    color: inherit;
    background: none;
    border: 0;
    padding: 0;
    margin: 0;
    outline: none;
}

svg {
    display: block;
    flex: none;
}

b {
    font-weight: normal;
    color: #3a7fca;
}

.blue {
    color: #3a7fca;
}

.sprite {
    display: none;
}

/* small shared icons */
.x { width: 7px; height: 7px; }
.lock { width: 10px; height: 12px; }
.menu { width: 10px; height: 10px; }
.i-more { width: 12px; height: 10px; color: #b5b5b5; }
.down { width: 10px; height: 6px; }
.right { width: 6px; height: 10px; }
.fx { width: 14px; height: 14px; }
.plug { width: 14px; height: 13px; }
.watch { width: 14px; height: 15px; }
.mag { width: 18px; height: 14px; }
.whorl { width: 13px; height: 12px; }

.chip {
    width: 11px;
    height: 11px;
}

.blue-chip { background: #6b7be0; }
.tan-chip { background: #ab9c78; }

.drop {
    position: relative;
    display: block;
    background: #171917;
    color: #a9aba9;
}

.drop select {
    appearance: none;
    display: block;
    width: 100%;
    height: 100%;
    padding-bottom: 2px;
}

.drop svg {
    position: absolute;
    right: 4px;
    top: 50%;
    width: 10px;
    height: 6px;
    margin-top: -3px;
    color: #858785;
    pointer-events: none;
}

.check {
    display: flex;
    align-items: center;
    gap: 4px;
}

.check input {
    appearance: none;
    width: 14px;
    height: 14px;
    border: 2px solid #8b8d8b;
    border-radius: 2px;
}

/* watermark behind the window */
.watermark {
    position: absolute;
    left: 10px;
    bottom: 10px;
    display: flex;
    align-items: center;
    gap: 8px;
    color: #5c5c5c;
    font: bold 33px/40px "DejaVu Sans", sans-serif;
}

/* window */
.app {
    position: relative;
    height: 100vh;
    margin: 0 179px 0 180px;
    border: solid #b0ab58;
    border-width: 0 3px;
    background: #232523;
    display: grid;
    grid-template-rows: 24px 24px 28px 1fr 245px;
    grid-template-columns: 1fr;
}

.titlebar, .menubar {
    background: #fdfffc;
    color: #222;
    font-size: 13px;
    display: flex;
}

.titlebar {
    padding: 1px 0 0 5px;
}

.logo {
    width: 17px;
    height: 17px;
    border-radius: 3px;
    background: #0a0a5c;
    color: #a5a0f5;
    font-size: 10px;
    font-weight: bold;
    text-align: center;
}

.titlebar h1 {
    font-size: 13px;
    line-height: 18px;
    margin-left: 5px;
}

.window-buttons {
    margin-left: auto;
    padding-right: 16px;
    display: flex;
    align-items: flex-start;
    gap: 36px;
}

.window-buttons button {
    height: 18px;
    display: flex;
    align-items: center;
}

.menubar {
    padding: 0 0 0 4px;
    gap: 14px;
}

.toolbar {
    display: flex;
    align-items: center;
    padding-left: 9px;
    background: #232523;
    border-bottom: 2px solid #171917;
}

.tool {
    position: relative;
    width: 26px;
    height: 24px;
    display: grid;
    place-items: center;
    color: #b9bbb9;
}

.tool svg {
    width: 17px;
    height: 17px;
}

.tool.active {
    color: #3a8ee6;
    background: #121412;
    background-clip: content-box;
    padding: 1px 2px;
}

.tool.off { color: #464846; }
.tool.faint { color: #2f312f; width: 24px; }

.tool.more::after {
    content: "";
    position: absolute;
    right: 1px;
    bottom: 2px;
    border: 2px solid transparent;
    border-right-color: currentColor;
    border-bottom-color: currentColor;
}

.sep {
    width: 8px;
    height: 22px;
    border-left: 1px solid #1a1c1a;
    margin-left: 4px;
    margin-right: -4px;
}

.axis {
    display: flex;
    height: 24px;
    margin-left: 25px;
    padding: 0 8px 0 21px;
    border: solid #1b1d1b;
    border-width: 0 1px;
}

.toolbar .check {
    margin-left: 7px;
}

.snap {
    display: flex;
    gap: 5px;
    margin-left: 7px;
    padding-right: 16px;
    border-right: 1px solid #1b1d1b;
}

.snap button {
    width: 20px;
    height: 20px;
    background: #121412;
    color: #3a7fca;
    display: grid;
    place-items: center;
}

.snap svg {
    width: 15px;
    height: 15px;
}

.paint {
    display: flex;
    align-items: center;
    margin-left: 10px;
}

.swatch {
    width: 26px;
    height: 19px;
    margin-left: 3px;
    border: 1px solid #8b8d8b;
}

.swatch.fill { background: #fff; }
.swatch.nostroke { border: 4px solid #5b5d5b; background: #191b19; }
.nostroke svg { margin: -4px; width: 26px; height: 19px; }
.stroke-label { margin-left: 13px; }
.stroke-px { margin: 0 30px 0 13px; color: #7b7d7b; }
.add { margin-left: 5px; }

.toolbar-end {
    display: flex;
    align-items: center;
    justify-content: flex-end;
    gap: 14px;
    flex: 0 0 315px;
    height: 24px;
    margin-left: auto;
    padding-right: 4px;
    border-left: 1px solid #161816;
}

.help {
    display: flex;
    align-items: center;
    gap: 9px;
    width: 203px;
    height: 20px;
    padding-left: 5px;
    background: #171917;
    color: #a9aba9;
}

.help svg {
    width: 16px;
    height: 13px;
}

.help input {
    width: 150px;
}

/* panels */
.workspace {
    display: grid;
    grid-template-columns: 292px 1fr 228px;
    gap: 4px;
    background: #171917;
    min-height: 0;
}

.panel {
    background: #232523;
    min-width: 0;
}

.tabs {
    display: flex;
    height: 28px;
}

.tab {
    display: flex;
    align-items: center;
    height: 27px;
    color: #7f817f;
    border-bottom: 2px solid transparent;
    padding-top: 2px;
}

.tab.active {
    color: #bcbebc;
    border-bottom-color: #b9bbb9;
}

.tab .x { margin: 0 8px 0 0; color: #777; }
.tab .chip { margin-right: 12px; }
.tab .lock { margin-right: 8px; }
.tab .menu { margin-left: 12px; }

.effect-controls .tab { margin-left: 14px; }

.tabs-more {
    margin-left: auto;
    padding-right: 3px;
}

.effect-controls {
    font-family: "Liberation Sans", Arial, sans-serif;
    font-size: 13px;
}

.effect-controls .tab, .ramp, .swap-colors {
    font-family: "Noto Sans CJK SC", sans-serif;
    font-size: 11px;
}

.path {
    height: 22px;
    padding: 6px 4px 0;
    border-bottom: 1px solid #0d0f0d;
    margin-right: 3px;
}

.fx-head {
    display: flex;
    align-items: center;
    height: 18px;
    margin: 1px 20px 0 0;
    padding-left: 4px;
    background: #1f211f;
}

.fx-head .fx { margin: 0 5px 0 4px; }
.fx-head .plug { margin-right: 6px; color: #b9bbb9; }
.fx-head strong { width: 105px; color: #a9aba9; }

.prop {
    display: grid;
    grid-template-columns: 18px 19px 109px 1fr;
    align-items: center;
    height: 18px;
    padding-left: 16px;
    white-space: nowrap;
}

.prop .right { justify-self: center; }

.prop > div {
    display: flex;
    align-items: center;
}

.box {
    display: grid;
    place-items: center;
    width: 23px;
    height: 16px;
    margin-right: 4px;
    border: 1px solid #6e706e;
}

.box + .blue { margin-left: 2px; }
.box.pink, .box.green { border-width: 2px; }
.box.pink { background: #f560f5; }
.box.green { background: #4cf58c; }

.ramp {
    width: 105px;
    height: 16px;
}

.ramp select { padding-left: 7px; }

.swap-colors {
    display: block;
    width: 106px;
    height: 17px;
    margin: -3px 0 0 162px;
    border: 1px solid #6e706e;
    line-height: 14px;
    color: #858785;
}

/* viewer */
.viewer {
    display: flex;
    flex-direction: column;
}

.viewer .layer-tab { margin: 0 63px 0 28px; }

.crumbs {
    height: 27px;
    padding: 4px 0 0 22px;
    border-bottom: 1px solid #171917;
}

.crumbs button {
    width: 73px;
    height: 17px;
    padding: 0 0 2px 9px;
    text-align: left;
    background: #171917;
    color: #3a7fca;
}

.stage {
    flex: 1;
    min-height: 0;
    display: flex;
    align-items: center;
    padding: 0 10px 2px 9px;
}

.comp {
    width: 100%;
    flex: 1;
    max-height: 100%;
}

.viewer-bar {
    display: flex;
    align-items: center;
    height: 25px;
    padding-left: 8px;
    border-top: 1px solid #171917;
}

.zoom { width: 68px; height: 20px; }
.zoom select { padding-left: 5px; }
.res { width: 88px; height: 20px; margin-left: 15px; }
.res select { padding-left: 7px; }

.view-icons {
    display: flex;
    margin-left: 12px;
}

.view-icons button {
    display: grid;
    place-items: center;
    width: 23px;
    height: 19px;
    color: #b0b2b0;
}

.view-icons svg {
    width: 15px;
    height: 15px;
}

.view-icons .on { color: #3a7fca; background: #151715; }
.view-icons .dim { color: #3b3d3b; }

.view-icons.bar {
    margin-left: 7px;
    padding-left: 3px;
    border-left: 1px solid #1b1d1b;
}

.exposure { margin-left: 3px; }

.view-icons.shots {
    margin-left: 17px;
    padding: 0 5px 0 4px;
    border-right: 1px solid #1b1d1b;
}

.view-time {
    width: 70px;
    height: 20px;
    padding-bottom: 2px;
    margin-left: 7px;
    background: #1b1d1b;
}

/* right column */
.side {
    border-right: 9px solid #31332d;
    position: relative;
}

.side::after {
    content: "";
    position: absolute;
    right: -9px;
    bottom: 0;
    width: 9px;
    height: 118px;
    background: #1e1f1a;
}

.side section {
    border-bottom: 1px solid #191b19;
}

.side h2 {
    display: flex;
    align-items: center;
    justify-content: space-between;
    height: 30px;
    padding: 0 13px 2px 14px;
    font-size: 11px;
    color: #a9aba9;
}

.info { height: 137px; }

.info-grid {
    display: grid;
    grid-template-columns: 27px 71px 24px 1fr;
    height: 66px;
    padding: 3px 0 0 9px;
    margin: 0 12px 0 0;
    border-bottom: 2px solid #2d2f2d;
    line-height: 14px;
}

.black {
    width: 21px;
    height: 21px;
    margin-top: 14px;
    background: #000;
}

.info-grid ul:first-of-type {
    border-right: 2px solid #2d2f2d;
    height: 56px;
}

.plus { margin: 25px 0 0 10px; }

.info p {
    padding: 4px 9px 0;
    line-height: 14px;
}

.preview h2 {
    height: 30px;
    padding-top: 4px;
    color: #7f817f;
}

.presets h2 {
    height: 36px;
}

.preset-search {
    display: flex;
    align-items: center;
    height: 18px;
    margin: 0 8px 4px 7px;
    padding: 0 4px 0 6px;
    background: #171917;
    color: #b0b2b0;
}

.preset-search .mag { color: #3a7fca; margin-right: 5px; }
.preset-search input { flex: 1; min-width: 0; }
.preset-search .x { width: 9px; height: 9px; }

.group, .preset {
    display: flex;
    align-items: center;
    font: 13px/16px "Liberation Sans", Arial, sans-serif;
}

.group {
    height: 20px;
    padding: 2px 0 0 6px;
    gap: 2px;
    border-top: 1px solid #0d0f0d;
}

.preset {
    height: 16px;
    margin-right: 4px;
    padding-left: 36px;
    gap: 5px;
    background: #333533;
    color: #b9bbb9;
}

.preset span {
    padding: 0 7px 0 3px;
    margin-left: -2px;
    background: #9c9e9c;
    color: #2b2d2b;
}

.preset-foot {
    display: flex;
    align-items: flex-start;
    justify-content: flex-end;
    height: 22px;
    margin-top: 1px;
    padding: 2px 10px 0 0;
    border-top: 1px solid #0d0f0d;
    color: #b0b2b0;
}

.paragraph { height: 159px; }

.align {
    display: flex;
    height: 34px;
    margin: 0 20px 0 9px;
    border-bottom: 1px solid #2d2f2d;
}

.align button, .dir button {
    display: grid;
    place-items: center;
    width: 20px;
    height: 20px;
    margin: 5px 6px 0 0;
    color: #a5a7a5;
}

.align svg { width: 16px; height: 14px; }
.align .gap { margin-left: 7px; }
.align .on, .dir .on { background: #121412; color: #3a7fca; }

.indents {
    display: grid;
    grid-template-columns: 75px 69px 1fr;
    grid-auto-rows: 21px;
    padding: 0 0 0 7px;
    color: #7f817f;
}

.indents div {
    display: flex;
    gap: 5px;
}

.indents svg { width: 18px; height: 15px; margin-top: 4px; color: #a5a7a5; }
.indents .dir { gap: 6px; }
.indents .dir button { margin: 3px 0 0; }
.indents .dir .on svg { color: #3a8ee6; }
.indents .dir svg { margin: 0; }

.side .character {
    border: 0;
}

.character h2 {
    height: 40px;
    padding-bottom: 8px;
}

.font-row {
    display: flex;
    height: 51px;
    margin: 0 8px 0 7px;
    border-bottom: 2px solid #2d2f2d;
}

.fonts {
    width: 124px;
}

.fonts .drop {
    height: 19px;
    margin-bottom: 6px;
}

.fonts .drop svg { right: 2px; }

.fonts select { padding-left: 7px; }

.pick {
    margin: 2px 6px 0 9px;
    width: 20px;
    color: #a5a7a5;
}

.bw {
    display: block;
    width: 20px;
    height: 19px;
    margin-top: 5px;
    border: 1px solid #999;
    background: linear-gradient(#000 45%, #fff 45%);
}

.colors { color: #a5a7a5; }

.pair {
    display: grid;
    grid-template-columns: 110px 1fr;
    grid-auto-rows: 22px;
    height: 53px;
    margin: 0 8px 0 7px;
    padding-top: 2px;
    border-bottom: 2px solid #2d2f2d;
    color: #7f817f;
}

.pair div {
    display: grid;
    grid-template-columns: 25px 1fr 14px;
    align-items: center;
}

.pair div:nth-child(even) {
    grid-template-columns: 33px 1fr 14px;
}

.pair div svg {
    width: 18px;
    height: 17px;
    color: #a5a7a5;
}

.pair div i {
    border: 4px solid transparent;
    border-top: 7px solid #a5a7a5;
    border-bottom: 0;
    width: 8px;
}

.pair div:nth-child(odd) i {
    margin-left: -25px;
}

.metrics { color: #444644; }

.stroke-row {
    grid-template-columns: 84px 1fr;
    height: 33px;
    padding-top: 4px;
}

.stroke-row div:nth-child(odd) i { margin-left: 0; }
.stroke-row select { padding-left: 8px; }
.stroke-row .drop { height: 19px; margin-top: 1px; }

.styles {
    display: grid;
    grid-template-columns: 26px 26px 36px 24px 32px 20px;
    padding: 8px 0 0 26px;
    font: 16px/18px "Liberation Serif", serif;
    color: #a5a7a5;
}

.heavy { font-weight: bold; }
.ital { font-style: italic; }
.styles small { font-size: 12px; }
.styles sup, .styles sub { font-size: 9px; line-height: 0; }

.checks {
    display: grid;
    grid-template-columns: 103px 1fr;
    padding: 10px 0 0 11px;
    color: #7f817f;
}

/* timeline */
.timeline {
    position: relative;
    display: flex;
    flex-direction: column;
    border-top: 3px solid #171917;
    box-shadow: inset 0 2px #2b5686;
    min-height: 0;
}

.timeline .tabs {
    height: 30px;
    padding-top: 1px;
}

.queue-tab { margin: 0 42px 0 27px; }
.comp-name { margin: 0 0 0 3px; }

.time-body {
    flex: 1;
    display: grid;
    grid-template-columns: 853px 1fr;
    min-height: 0;
}

.layers {
    display: flex;
    flex-direction: column;
    border-right: 1px solid #0a0c0a;
}

.time-head {
    display: flex;
    height: 38px;
}

.timecode {
    width: 113px;
    padding: 2px 0 0 9px;
}

.timecode strong {
    display: block;
    padding-left: 4px;
    font: 500 17px/19px "Noto Sans CJK SC", sans-serif;
    color: #3a8ee6;
}

.timecode small {
    display: block;
    font-size: 11px;
    line-height: 15px;
    color: #204a78;
}

.layer-search {
    width: 565px;
    height: 20px;
    margin-top: 8px;
    padding: 2px 7px;
    background: #171917;
    display: flex;
}

.layer-search input { flex: 1; }

.time-tools {
    display: grid;
    grid-template-columns: 35px 28px 27px 27px 1fr;
    margin: 9px 0 0 17px;
    height: 18px;
    flex: 1;
    color: #a5a7a5;
}

.time-tools button {
    display: flex;
    align-items: center;
}

.time-tools svg { width: 17px; height: 16px; }
.time-tools button:last-child { padding-left: 8px; }

.lrow {
    display: grid;
    grid-template-columns: 69px 34px 34px 407px 171px 122px 1fr;
    height: 18px;
    color: #b0b2b0;
}

.lrow > div {
    display: flex;
    align-items: center;
    min-width: 0;
}

.lhead {
    height: 19px;
    background: #313331;
    border-top: 1px solid #171917;
    border-bottom: 1px solid #171917;
    font-size: 10px;
}

.lhead > div {
    border-right: 1px solid #171917;
}

.cells { padding-left: 2px; }
.cells.sw { padding-left: 3px; }

.cells svg {
    width: 12px;
    height: 12px;
    margin: 0 2px;
}

.cells i {
    width: 14px;
    height: 14px;
    margin: 0 1px;
    background: #3c3e3c;
}

.cells .none { background: none; }
.cells .dimmed { color: #777; }
.center { padding-left: 15px; }
.center svg { width: 12px; height: 12px; }
.num { padding-left: 6px; }
.lname { padding-left: 7px; }

.layer {
    background: #494b49;
}

.label { padding-left: 6px; gap: 3px; }
.label .chip { width: 13px; height: 13px; }
.index { padding-left: 9px; font: bold 13px "Liberation Sans", sans-serif; }

.layer .lname { padding-left: 4px; }
.star { width: 12px; height: 12px; }

.name-box {
    flex: 1;
    height: 18px;
    margin: 0 1px 0 5px;
    padding: 0 3px;
    border: 2px solid #a9aba9;
    font: bold 13px/16px "Liberation Sans", sans-serif;
}

.parent { padding-left: 5px; }
.layer .whorl { margin-right: 7px; }
.layer .drop { width: 88px; height: 17px; }
.layer .drop select { padding-left: 7px; }

.lprop {
    font: 13px/16px "Liberation Sans", sans-serif;
    color: #9b9d9b;
}

.keys { padding-left: 5px; }
.keys svg { width: 6px; height: 9px; margin: 0 7px 0 1px; color: #b0b2b0; }
.keys .ghost { color: #4a4c4a; margin-left: 2px; }
.keys .key { width: 10px; height: 10px; margin: 0 7px 0 0; color: #3a8ee6; }
.stop { padding-left: 21px; color: #3a7fca; }

.lprop .lname { padding-left: 8px; }
.curve { width: 12px; height: 11px; }

.prop-name {
    flex: 1;
    height: 18px;
    margin-left: 5px;
    padding: 2px 4px 0;
}

.picked { background: #494b49; }
.value { padding: 1px 0 0 6px; }
.lprop .parent { padding-left: 18px; }
.chain { width: 12px; height: 8px; margin: 0 5px 0 -1px; }

.layers-foot {
    display: flex;
    margin-top: auto;
    height: 16px;
    padding-left: 4px;
    line-height: 16px;
    border-top: 1px solid #0a0c0a;
}

.layers-foot svg { width: 13px; height: 13px; margin: 2px 7px 0 0; }
.layers-foot span { margin-left: 5px; }
.layers-foot .lit { color: #3a7fca; }
.layers-foot b { color: #4cc89a; }

.layers-foot button {
    width: 169px;
    height: 15px;
    line-height: 16px;
    margin: 0 139px 0 auto;
    background: #1d1f1d;
}

.tracks {
    position: relative;
    display: flex;
    flex-direction: column;
    margin-left: 2px;
    padding: 7px 25px 0 7px;
    border-left: 1px solid #0a0c0a;
}

.navigator, .work-area {
    position: relative;
    height: 9px;
    background: #626462;
    outline: 1px solid #0d0f0d;
}

.work-area {
    height: 15px;
    background: #60605e;
}

/* end handles of the two range bars */
.navigator::before, .navigator::after, .work-area::before, .work-area::after {
    content: "";
    position: absolute;
    top: 0;
    bottom: 0;
    left: -6px;
    width: 6px;
    background: #3a8ee6;
    border-radius: 4px 0 0 4px;
}

.navigator::after, .work-area::after {
    left: 100%;
    border-radius: 0 4px 4px 0;
}

.ruler {
    display: flex;
    justify-content: space-between;
    height: 22px;
    font: 12px/18px "Liberation Sans", sans-serif;
}

.ruler li {
    display: flex;
    flex-direction: column;
    align-items: center;
    width: 0;
}

.ruler li::after {
    content: "";
    height: 4px;
    border-left: 1px solid #777;
}

.cache {
    position: relative;
    height: 4px;
    margin-top: 1px;
    background: #2aa63a;
}

.cache i {
    position: absolute;
    top: 0;
    height: 4px;
    background: #124a1a;
}

.clip {
    height: 17px;
    margin-top: 1px;
    background: linear-gradient(#8d97dd 0, #6b79d6 3px, #4d5cc6);
}

.track {
    position: relative;
    height: 18px;
    background: #313331;
    border-bottom: 1px solid #1d1f1d;
}

.rest {
    flex: 1;
    border: 0;
}

.kf {
    position: absolute;
    top: 4px;
    width: 10px;
    height: 10px;
    margin-left: -5px;
    color: #b9bbb9;
}

.kf.sel { color: #3a8ee6; }

.playhead {
    position: absolute;
    left: 6px;
    top: 18px;
    bottom: 15px;
    width: 2px;
    background: #2f78c0;
}

.side-marks {
    position: absolute;
    right: 1px;
    top: 40px;
    display: grid;
    justify-items: end;
    gap: 9px;
    color: #b0b2b0;
}

.tracks-foot {
    display: flex;
    align-items: center;
    height: 15px;
    padding: 3px 0 0 0;
    color: #a5a7a5;
}

.tracks-foot input {
    appearance: none;
    width: 50px;
    height: 2px;
    margin: 0 13px 0 11px;
    background: #3d3f3d;
}

.tracks-foot input::-webkit-slider-thumb {
    appearance: none;
    width: 10px;
    height: 10px;
    border: 2px solid #8b8d8b;
    border-radius: 50%;
    background: #232523;
}

/* click highlight and mouse arrow */
.pointer {
    position: absolute;
    left: 818px;
    top: 27px;
    width: 52px;
    height: 52px;
    border-radius: 50%;
    background: rgba(205, 200, 15, 0.7);
    pointer-events: none;
}

.pointer svg {
    position: absolute;
    left: 26px;
    top: 26px;
}
```
